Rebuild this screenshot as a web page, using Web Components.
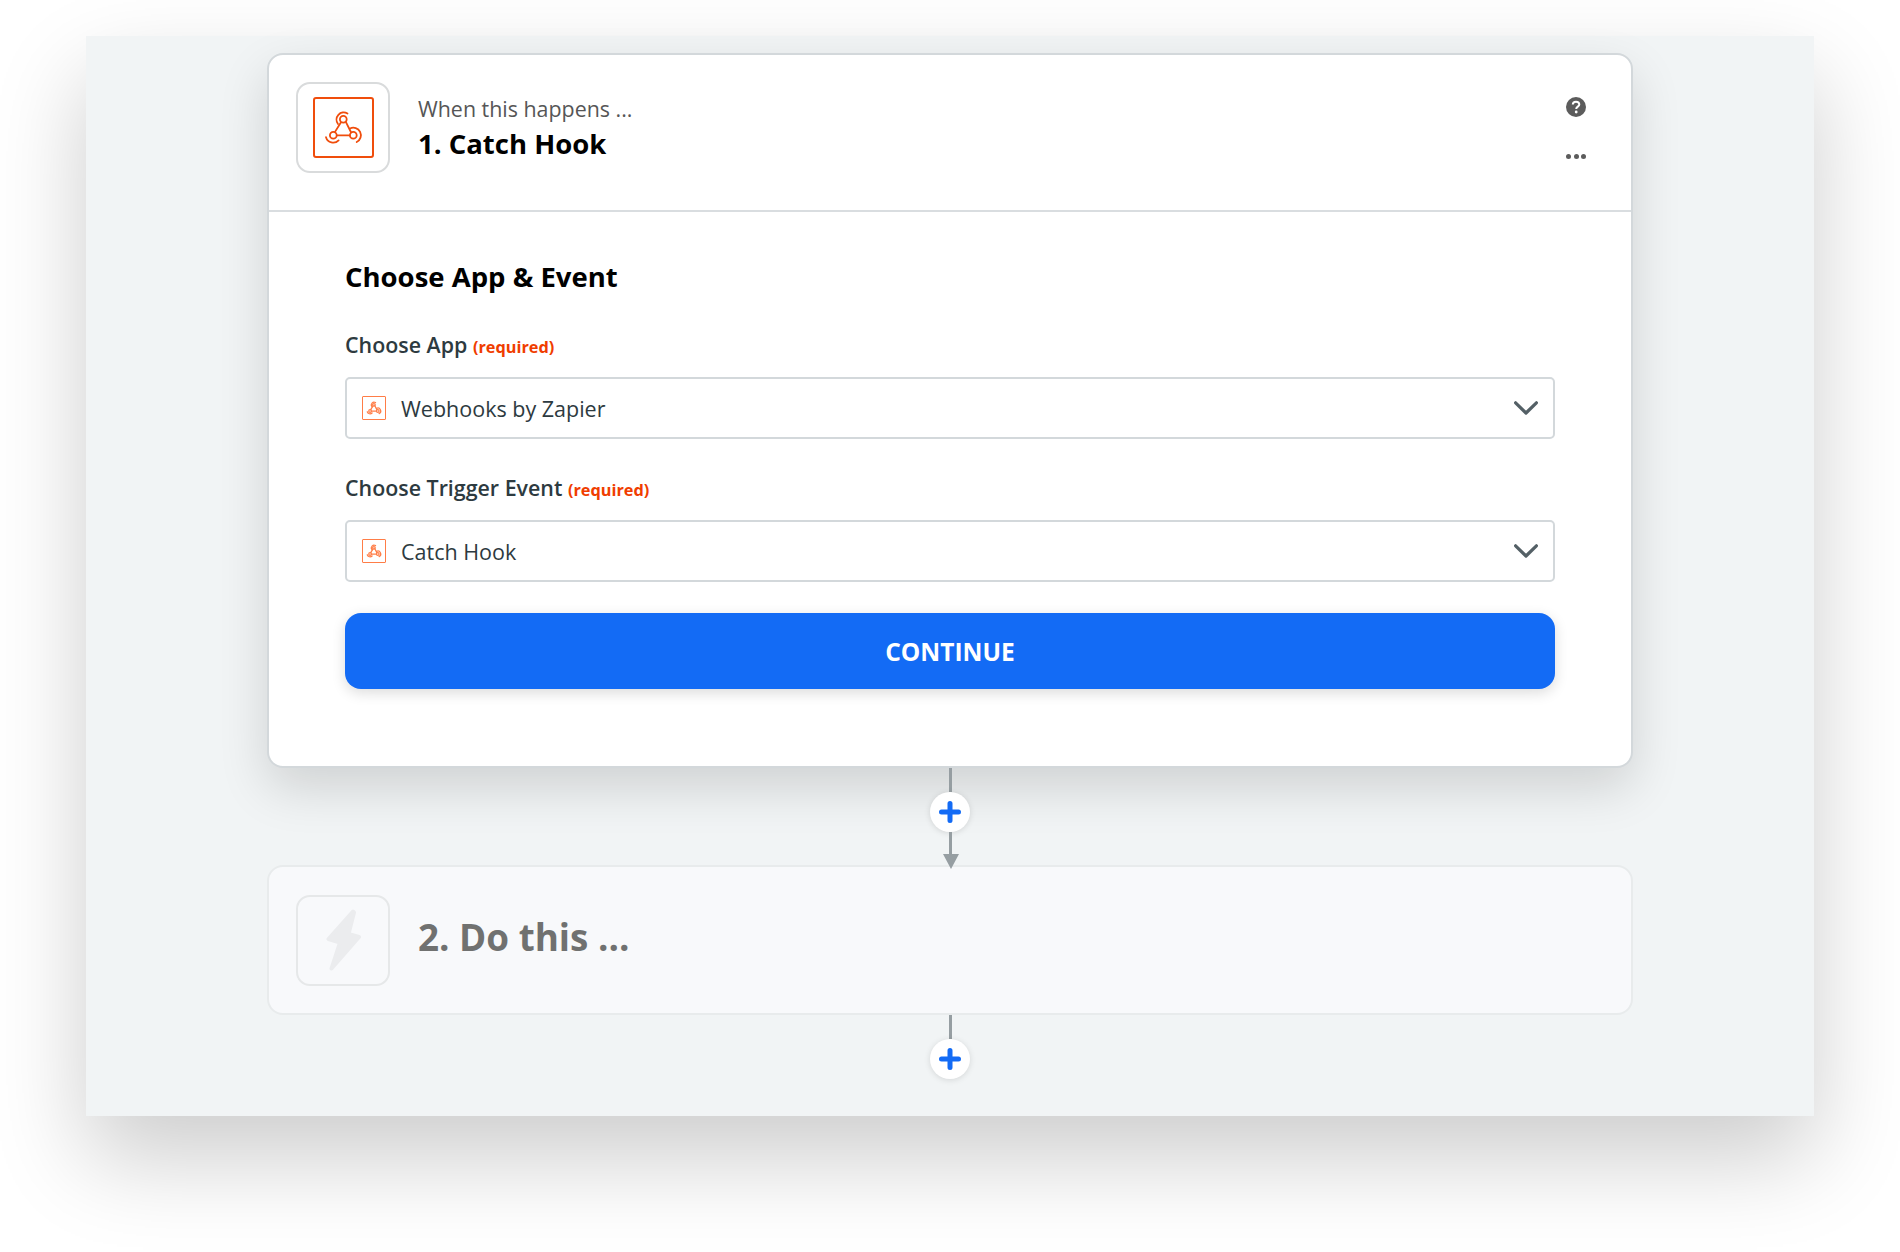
<!DOCTYPE html>
<html>
<head>
<meta charset="utf-8">
<title>Zap editor</title>
<style>
html, body { margin: 0; background: #fff; }
body { font-family: "Open Sans", sans-serif; height: 1252px; overflow: hidden; }
</style>
</head>
<body>
<zap-frame>
  <zap-step kind="trigger">
    <hook-icon slot="icon" size="61"></hook-icon>
    <span slot="eyebrow">When this happens ...</span>
    <span slot="title">1. Catch Hook</span>
    <zap-form>
      <span slot="heading">Choose App &amp; Event</span>
      <zap-select label="Choose App" value="Webhooks by Zapier"></zap-select>
      <zap-select label="Choose Trigger Event" value="Catch Hook"></zap-select>
      <zap-button>CONTINUE</zap-button>
    </zap-form>
  </zap-step>
  <zap-connector arrow></zap-connector>
  <zap-step kind="empty">
    <span slot="title">2. Do this ...</span>
  </zap-step>
  <zap-connector></zap-connector>
</zap-frame>

<script>
class ZapFrame extends HTMLElement {
  constructor() {
    super();
    this.attachShadow({ mode: 'open' }).innerHTML = `
<style>
:host {
  display: flex;
  flex-direction: column;
  align-items: center;
  box-sizing: border-box;
  width: 1728px;
  height: 1080px;
  margin: 36px 86px 0;
  padding-top: 17px;
  background: #f1f4f5;
  box-shadow: 0 42px 88px rgba(0, 0, 0, 0.2);
}
</style>
<slot></slot>`;
  }
}

class HookIcon extends HTMLElement {
  constructor() {
    super();
    const size = this.getAttribute('size') || 61;
    const small = size < 40;
    const colour = small ? '#ff7d47' : '#f04d0c';
    this.attachShadow({ mode: 'open' }).innerHTML = `
<style>
:host {
  display: block;
  flex: none;
  box-sizing: border-box;
  width: ${size}px;
  height: ${size}px;
  border: ${small ? 1.5 : 2}px solid ${colour};
  border-radius: ${small ? 1 : 3}px;
  background: #fff;
}
svg { display: block; width: 100%; height: 100%; }
</style>
<svg viewBox="2 2 57 57" fill="none" stroke="${colour}" stroke-width="${small ? 3.2 : 1.8}" stroke-linecap="round">
  <circle cx="30.3" cy="22.3" r="3.4"/>
  <circle cx="20.3" cy="38.3" r="3.4"/>
  <circle cx="40.3" cy="38.3" r="3.4"/>
  <path d="M27.7 25.7 L22 34.9 M32.7 24.7 L37.9 35 M24 38.3 H36.8"/>
  <path d="M34.5 16.5 A7.2 7.2 0 0 0 25 27"/>
  <path d="M13 40.2 A7.5 7.5 0 0 0 25.6 43.4"/>
  <path d="M37 31.5 A7.5 7.5 0 0 1 43.7 45"/>
</svg>`;
  }
}

class ZapStep extends HTMLElement {
  constructor() {
    super();
    const empty = this.getAttribute('kind') === 'empty';
    this.attachShadow({ mode: 'open' }).innerHTML = `
<style>
:host {
  display: block;
  box-sizing: border-box;
  width: 1366px;
  flex: none;
  border: 2px solid ${empty ? '#e8ebec' : '#d3d8db'};
  border-radius: 16px;
  background: ${empty ? '#f8f9fb' : '#fff'};
  ${empty ? '' : 'box-shadow: 0 20px 50px rgba(0, 0, 0, 0.14);'}
}
header {
  box-sizing: border-box;
  display: flex;
  align-items: center;
  height: ${empty ? 146 : 157}px;
  padding: 0 45px ${empty ? 0 : 11}px 27px;
  ${empty ? '' : 'border-bottom: 2px solid #d9dde0;'}
}
.tile {
  flex: none;
  box-sizing: border-box;
  display: flex;
  align-items: center;
  justify-content: center;
  width: 94px;
  height: 91px;
  border: 2px solid ${empty ? '#e6e8e9' : '#d9dbdc'};
  border-radius: 14px;
  margin-right: 28px;
}
.text { flex: 1; display: flex; flex-direction: column; padding-top: ${empty ? 0 : 2}px; }
.eyebrow { font-size: 21.4px; line-height: 30px; color: #565656; }
.title {
  font-weight: 700;
  font-size: ${empty ? 36.8 : 27.5}px;
  line-height: ${empty ? 44 : 38}px;
  color: ${empty ? '#707170' : '#000'};
  ${empty ? 'margin-top: -7px;' : 'margin-top: 1px;'}
}
.tools {
  align-self: flex-start;
  display: flex;
  flex-direction: column;
  align-items: center;
  gap: 37px;
  margin-top: 42px;
}
.dots { display: flex; gap: 2.5px; }
.dots i { width: 5px; height: 5px; border-radius: 50%; background: #5c5c5c; }
svg { display: block; }
</style>
<header>
  <div class="tile">
    <slot name="icon">
      <svg width="35" height="62" viewBox="0 0 35 62">
        <path d="M27 2.5 L2.5 30 L14 33.5 L5.5 59.5 L33 28 L22.5 25 L28 3.5 Z" fill="#ebecee" stroke="#ebecee" stroke-width="4" stroke-linejoin="round"/>
      </svg>
    </slot>
  </div>
  <div class="text">
    <span class="eyebrow" ${empty ? 'hidden' : ''}><slot name="eyebrow"></slot></span>
    <span class="title"><slot name="title"></slot></span>
  </div>
  ${empty ? '' : `<div class="tools">
    <svg width="20" height="20" viewBox="0 0 20 20">
      <circle cx="10" cy="10" r="10" fill="#5c5c5c"/>
      <path d="M6.8 7.6 C6.8 5.8 8.2 4.7 10 4.7 C11.9 4.7 13.3 5.8 13.3 7.5 C13.3 9.6 10.2 9.7 10.2 12" fill="none" stroke="#fff" stroke-width="2"/>
      <circle cx="10.2" cy="15" r="1.4" fill="#fff"/>
    </svg>
    <div class="dots"><i></i><i></i><i></i></div>
  </div>`}
</header>
<slot></slot>`;
  }
}

class ZapForm extends HTMLElement {
  constructor() {
    super();
    this.attachShadow({ mode: 'open' }).innerHTML = `
<style>
:host {
  display: block;
  padding: 46px 76px 77px;
}
h2 {
  margin: 0 0 34px;
  font-size: 27.5px;
  line-height: 38px;
  font-weight: 700;
  color: #000;
}
</style>
<h2><slot name="heading"></slot></h2>
<slot></slot>`;
  }
}

class ZapSelect extends HTMLElement {
  constructor() {
    super();
    this.attachShadow({ mode: 'open' }).innerHTML = `
<style>
:host {
  display: block;
  margin-bottom: 34px;
}
label {
  display: block;
  margin-bottom: 15px;
  font-size: 21.4px;
  line-height: 30px;
  font-weight: 600;
  color: #2d3a40;
}
label em {
  font-style: normal;
  font-size: 16.3px;
  font-weight: 700;
  color: #f03d00;
}
.box {
  box-sizing: border-box;
  display: flex;
  align-items: center;
  height: 62px;
  padding: 0 15px;
  border: 2px solid #d3d8db;
  border-radius: 5px;
  background: #fff;
}
.value {
  flex: 1;
  margin-left: 15px;
  font-size: 21.5px;
  color: #2d3a40;
}
svg { display: block; flex: none; }
</style>
<label>${this.getAttribute('label')} <em>(required)</em></label>
<div class="box">
  <hook-icon size="24"></hook-icon>
  <span class="value">${this.getAttribute('value')}</span>
  <svg width="24" height="14" viewBox="0 0 24 14" fill="none" stroke="#546066" stroke-width="3.2" stroke-linecap="round" stroke-linejoin="round">
    <path d="M1.6 1.8 L12 12 L22.4 1.8"/>
  </svg>
</div>`;
  }
}

class ZapButton extends HTMLElement {
  constructor() {
    super();
    this.attachShadow({ mode: 'open' }).innerHTML = `
<style>
:host {
  display: flex;
  align-items: center;
  justify-content: center;
  height: 76px;
  margin-top: -3px;
  border-radius: 16px;
  background: #136bf5;
  box-shadow: 0 4px 14px rgba(0, 0, 0, 0.14);
  color: #fff;
  font-size: 24.5px;
  font-weight: 700;
}
</style>
<slot></slot>`;
  }
}

class ZapConnector extends HTMLElement {
  constructor() {
    super();
    const arrow = this.hasAttribute('arrow');
    this.attachShadow({ mode: 'open' }).innerHTML = `
<style>
:host {
  display: flex;
  flex-direction: column;
  align-items: center;
  flex: none;
  height: ${arrow ? 97 : 64}px;
  z-index: 1;
}
.line { width: 3px; background: #969ea2; flex: none; }
.top { height: 24px; }
.bottom { height: 22px; }
.plus {
  flex: none;
  display: flex;
  align-items: center;
  justify-content: center;
  width: 40px;
  height: 40px;
  border-radius: 50%;
  background: #fff;
  box-shadow: 0 1px 6px rgba(0, 0, 0, 0.12);
}
.arrow { display: block; flex: none; margin-left: 1px; }
</style>
<div class="line top"></div>
<div class="plus">
  <svg width="22" height="22" viewBox="0 0 22 22">
    <path d="M11 2.5 V19.5 M2.5 11 H19.5" stroke="#136bf5" stroke-width="5" stroke-linecap="round"/>
  </svg>
</div>
${arrow ? `<div class="line bottom"></div>
<svg class="arrow" width="16" height="15" viewBox="0 0 16 15"><path d="M0 0 H16 L8 15 Z" fill="#969ea2"/></svg>` : ''}`;
  }
}

customElements.define('hook-icon', HookIcon);
customElements.define('zap-frame', ZapFrame);
customElements.define('zap-step', ZapStep);
customElements.define('zap-form', ZapForm);
customElements.define('zap-select', ZapSelect);
customElements.define('zap-button', ZapButton);
customElements.define('zap-connector', ZapConnector);
</script>
</body>
</html>
